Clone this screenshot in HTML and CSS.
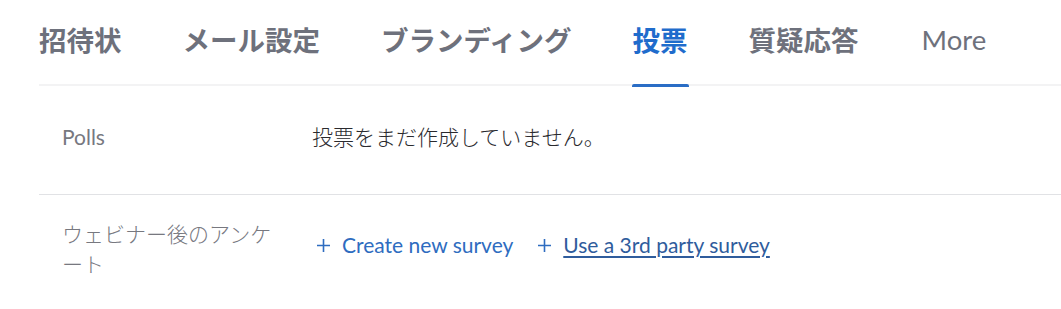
FILE: index.html
```html
<!DOCTYPE html>
<html lang="ja">
<head>
<meta charset="utf-8">
<title>投票</title>
<link rel="stylesheet" href="styles.css">
</head>
<body>
<div class="page">
  <nav class="tabs">
    <a class="tab">招待状</a>
    <a class="tab">メール設定</a>
    <a class="tab">ブランディング</a>
    <a class="tab active">投票</a>
    <a class="tab">質疑応答</a>
    <a class="tab more">More</a>
  </nav>
  <div class="row row-polls">
    <div class="label">Polls</div>
    <div class="value">投票をまだ作成していません。</div>
  </div>
  <div class="row row-survey">
    <div class="label">ウェビナー後のアンケート</div>
    <div class="value links">
      <a class="link"><svg class="plus" viewBox="0 0 15 15" width="15" height="15"><path d="M7.5 1v13M1 7.5h13" stroke="currentColor" stroke-width="1.6" fill="none"/></svg>Create new survey</a>
      <a class="link"><svg class="plus" viewBox="0 0 15 15" width="15" height="15"><path d="M7.5 1v13M1 7.5h13" stroke="currentColor" stroke-width="1.6" fill="none"/></svg><span class="u">Use a 3rd party survey</span></a>
    </div>
  </div>
</div>
</body>
</html>
```
FILE: styles.css
```css
html, body {
  margin: 0;
  padding: 0;
  background: #fff;
}
body {
  font-family: "Lato", "Noto Sans CJK JP", sans-serif;
}
.page {
  padding-left: 39px;
}
.tabs {
  display: flex;
  gap: 61px;
  height: 84px;
  border-bottom: 2px solid #f3f3f4;
}
.tab {
  display: flex;
  align-items: center;
  height: 84px;
  padding-bottom: 6px;
  box-sizing: border-box;
  font-size: 27.5px;
  font-weight: 700;
  color: #6e717c;
  position: relative;
}
.tab.more {
  font-weight: 400;
  font-size: 27.5px;
  margin-left: 2px;
}
.tab.active {
  color: #1f6ccc;
}
.tab.active::after {
  content: "";
  position: absolute;
  left: -1px;
  right: -1px;
  bottom: -3px;
  height: 3px;
  border-radius: 2px 2px 0 0;
  background: #2a6dc5;
}
.row {
  display: flex;
  align-items: center;
}
.row-polls {
  padding: 36px 0 42px;
  border-bottom: 1px solid #e1e2e5;
}
.row-survey {
  padding: 24px 0;
}
.label {
  width: 220px;
  padding-left: 23px;
  margin-right: 30px;
  flex: none;
  font-size: 21px;
  line-height: 30px;
  color: #77787f;
  font-weight: 300;
}
.row-polls .label {
  font-weight: 400;
  font-size: 21px;
}
.value {
  font-size: 21px;
  line-height: 28px;
  color: #2a2a2e;
  font-weight: 300;
}
.links {
  display: flex;
  gap: 24px;
  margin-top: -8px;
  margin-left: 4px;
}
.link {
  display: flex;
  align-items: center;
  gap: 11px;
  color: #2e6cc0;
  font-weight: 400;
}
.plus {
  flex: none;
}
.u {
  color: #2f5c9c;
  text-decoration: underline;
  text-underline-offset: 3px;
}
```
